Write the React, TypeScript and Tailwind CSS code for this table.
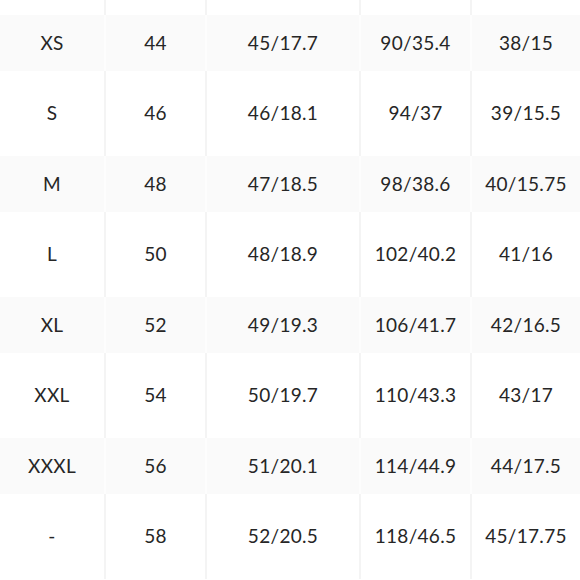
const rows = [
  ["XS", "44", "45/17.7", "90/35.4", "38/15"],
  ["S", "46", "46/18.1", "94/37", "39/15.5"],
  ["M", "48", "47/18.5", "98/38.6", "40/15.75"],
  ["L", "50", "48/18.9", "102/40.2", "41/16"],
  ["XL", "52", "49/19.3", "106/41.7", "42/16.5"],
  ["XXL", "54", "50/19.7", "110/43.3", "43/17"],
  ["XXXL", "56", "51/20.1", "114/44.9", "44/17.5"],
  ["-", "58", "52/20.5", "118/46.5", "45/17.75"],
]

const grid = "grid grid-cols-[104px_101px_154px_111px_1fr]"

export default function App() {
  return (
    <div className="w-[580px] h-[580px] bg-white text-[#262626] overflow-hidden font-['Lato',sans-serif] text-[19px] tracking-[0.3px]">
      {/* top spacer */}
      <div className={`${grid} h-[15px]`}>
        {[0, 1, 2, 3, 4].map((i) => (
          <div key={i} className={i === 0 ? "" : "border-l-2 border-[#f4f4f4]"} />
        ))}
      </div>
      {rows.map((row, r) => {
        const shaded = r % 2 === 0
        return (
          <div
            key={r}
            className={`${grid} ${shaded ? "h-[56px] bg-[#fafafa]" : "h-[85px] bg-white"}`}
          >
            {row.map((cell, i) => (
              <div
                key={i}
                className={`flex items-center justify-center ${
                  i === 0 ? "" : shaded ? "border-l-2 border-[#fdfdfd]" : "border-l-2 border-[#f4f4f4]"
                }`}
              >
                {cell}
              </div>
            ))}
          </div>
        )
      })}
    </div>
  )
}
